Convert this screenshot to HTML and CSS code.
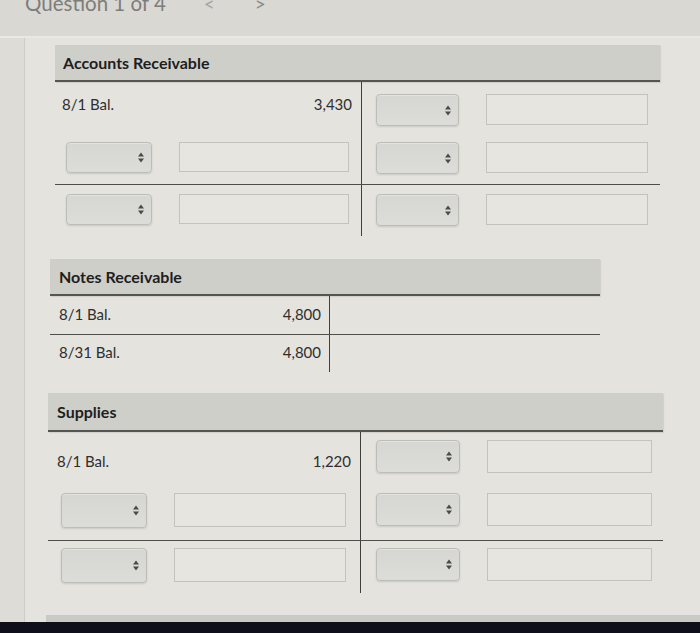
FILE: index.html
```html
<!DOCTYPE html>
<html>
<head>
<meta charset="utf-8">
<link rel="stylesheet" href="styles.css">
</head>
<body>
<div class="topbar">
  <span class="qtitle">Question 1 of 4</span>
  <span class="nav prev">&lt;</span>
  <span class="nav next">&gt;</span>
</div>
<div class="main">
  <div class="strip"></div>
  <div class="content">

    <section class="acct ar">
      <div class="hdr">Accounts Receivable</div>
      <div class="row r1">
        <div class="lc"><span class="lbl">8/1 Bal.</span><span class="num">3,430</span></div>
        <div class="rc"><div class="sel"><svg class="arr" viewBox="0 0 6 10"><path d="M3 0L6 4H0Z M3 10L0 6H6Z"/></svg></div><div class="inp"></div></div>
      </div>
      <div class="row r2">
        <div class="lc"><div class="sel"><svg class="arr" viewBox="0 0 6 10"><path d="M3 0L6 4H0Z M3 10L0 6H6Z"/></svg></div><div class="inp"></div></div>
        <div class="rc"><div class="sel"><svg class="arr" viewBox="0 0 6 10"><path d="M3 0L6 4H0Z M3 10L0 6H6Z"/></svg></div><div class="inp"></div></div>
      </div>
      <div class="row r3 sep">
        <div class="lc"><div class="sel"><svg class="arr" viewBox="0 0 6 10"><path d="M3 0L6 4H0Z M3 10L0 6H6Z"/></svg></div><div class="inp"></div></div>
        <div class="rc"><div class="sel"><svg class="arr" viewBox="0 0 6 10"><path d="M3 0L6 4H0Z M3 10L0 6H6Z"/></svg></div><div class="inp"></div></div>
      </div>
    </section>

    <section class="acct nr">
      <div class="hdr">Notes Receivable</div>
      <div class="row">
        <div class="lc"><span class="lbl">8/1 Bal.</span><span class="num">4,800</span></div>
        <div class="rc"></div>
      </div>
      <div class="row sep">
        <div class="lc"><span class="lbl">8/31 Bal.</span><span class="num">4,800</span></div>
        <div class="rc"></div>
      </div>
    </section>

    <section class="acct sp">
      <div class="hdr">Supplies</div>
      <div class="row r1">
        <div class="lc"><span class="lbl">8/1 Bal.</span><span class="num">1,220</span></div>
        <div class="rc"><div class="sel"><svg class="arr" viewBox="0 0 6 10"><path d="M3 0L6 4H0Z M3 10L0 6H6Z"/></svg></div><div class="inp"></div></div>
      </div>
      <div class="row r2">
        <div class="lc"><div class="sel"><svg class="arr" viewBox="0 0 6 10"><path d="M3 0L6 4H0Z M3 10L0 6H6Z"/></svg></div><div class="inp"></div></div>
        <div class="rc"><div class="sel"><svg class="arr" viewBox="0 0 6 10"><path d="M3 0L6 4H0Z M3 10L0 6H6Z"/></svg></div><div class="inp"></div></div>
      </div>
      <div class="row r3 sep">
        <div class="lc"><div class="sel"><svg class="arr" viewBox="0 0 6 10"><path d="M3 0L6 4H0Z M3 10L0 6H6Z"/></svg></div><div class="inp"></div></div>
        <div class="rc"><div class="sel"><svg class="arr" viewBox="0 0 6 10"><path d="M3 0L6 4H0Z M3 10L0 6H6Z"/></svg></div><div class="inp"></div></div>
      </div>
    </section>

    <div class="footstrip"></div>
  </div>
</div>
<div class="bottombar"></div>
</body>
</html>
```
FILE: styles.css
```css
* { box-sizing: border-box; }
html, body {
  margin: 0;
  padding: 0;
  width: 700px;
  height: 633px;
  overflow: hidden;
  background: #e4e3de;
  font-family: Lato, "Liberation Sans", sans-serif;
  color: #333;
}
.topbar {
  height: 38px;
  background: #d9d8d3;
  border-bottom: 2px solid #e9e8e4;
  display: flex;
  align-items: flex-start;
  overflow: hidden;
  padding-left: 25px;
}
.qtitle {
  font-size: 20.5px;
  line-height: 22px;
  margin-top: -8px;
  color: #7d7d7b;
}
.nav {
  font-size: 19px;
  line-height: 20px;
  margin-top: -6px;
  color: #a6a6a3;
}
.prev { margin-left: 38px; }
.next { margin-left: 40px; color: #8a8a88; }

.main {
  display: flex;
  height: 584px;
}
.strip {
  width: 25px;
  background: #dddcd7;
  border-right: 1px solid #cdccc7;
}
.content {
  flex: 1;
  display: flex;
  flex-direction: column;
}

.acct { display: flex; flex-direction: column; }
.hdr {
  background: #cfcfca;
  border-bottom: 2px solid #555652;
  font-weight: 700;
  font-size: 16px;
  color: #1e1e1e;
  display: flex;
  align-items: center;
  box-shadow: 1px 1px 1px rgba(0,0,0,0.08);
}
.row { display: flex; }
.row.sep { border-top: 1px solid #4e4f4b; }
.lc {
  border-right: 1px solid #3f403c;
  display: flex;
  align-items: flex-start;
}
.rc { display: flex; align-items: flex-start; }
.lbl { font-size: 15px; color: #2e2e2e; }
.num { font-size: 15px; color: #2e2e2e; margin-left: auto; }

.sel {
  border: 1px solid #bdbdb8;
  border-radius: 4px;
  background: linear-gradient(#d6d6d2, #dcdcd8);
  box-shadow: 0 1px 2px rgba(0,0,0,0.12), inset 0 1px 0 rgba(255,255,255,0.3);
  display: flex;
  align-items: center;
  justify-content: flex-end;
  padding-right: 7px;
}
.arr { width: 6px; height: 11px; fill: #4a4a48; }
.inp {
  border: 1px solid #c3c3be;
  background: #e6e5e0;
}

/* Accounts Receivable */
.ar { margin: 7px 0 0 30px; width: 605px; }
.ar .hdr { height: 37px; padding-left: 8px; }
.ar .lc { width: 307px; }
.ar .lc .sel { margin-left: 11px; width: 86px; height: 31px; }
.ar .lc .inp { margin-left: 27px; width: 170px; height: 30px; }
.ar .rc .sel { margin-left: 14px; width: 83px; height: 32px; }
.ar .rc .inp { margin-left: 27px; width: 162px; height: 31px; }
.ar .r1 .lc { padding: 13px 9px 0 7px; height: 52px; }
.ar .r1 .rc { padding-top: 12px; }
.ar .r2 .lc, .ar .r2 .rc { padding-top: 8px; height: 50px; }
.ar .r3 .lc, .ar .r3 .rc { padding-top: 9px; height: 51px; }

/* Notes Receivable */
.nr { margin: 23px 0 0 25px; width: 550px; }
.nr .hdr { height: 37px; padding-left: 9px; }
.nr .lc { width: 280px; height: 38px; padding: 9px 8px 0 9px; }
.nr .sep .lc { height: 37px; padding-top: 8px; }

/* Supplies */
.sp { margin: 21px 0 0 23px; width: 615px; }
.sp .hdr { height: 39px; padding-left: 9px; }
.sp .lc { width: 313px; }
.sp .lc .sel { margin-left: 13px; width: 86px; height: 35px; }
.sp .lc .inp { margin-left: 27px; width: 172px; height: 34px; }
.sp .rc .sel { margin-left: 15px; width: 84px; height: 33px; }
.sp .rc .inp { margin-left: 27px; width: 165px; height: 33px; }
.sp .r1 .lc { padding: 20px 9px 0 9px; height: 53px; }
.sp .r1 .rc { padding-top: 8px; }
.sp .r2 .lc, .sp .r2 .rc { padding-top: 8px; height: 55px; }
.sp .r3 .lc, .sp .r3 .rc { padding-top: 7px; height: 52px; }

.footstrip {
  margin-top: auto;
  margin-left: 21px;
  height: 7px;
  background: #c9c9c6;
}
.bottombar {
  height: 11px;
  background: #0e0f1a;
}
```
